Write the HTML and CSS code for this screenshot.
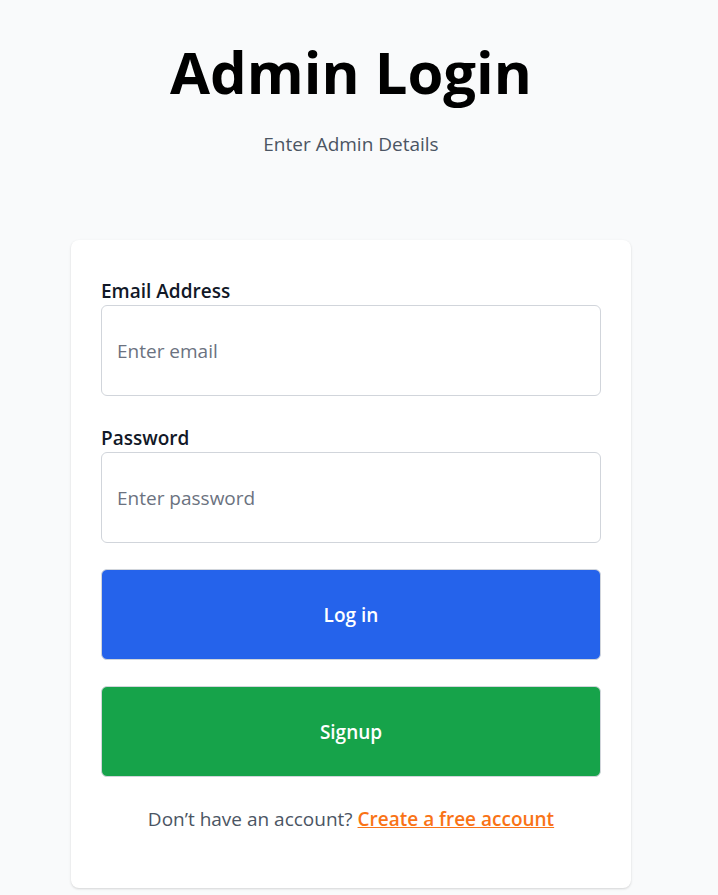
FILE: index.html
```html
<!DOCTYPE html>
<html lang="en">
<head>
<meta charset="utf-8">
<title>Admin Login</title>
<link rel="stylesheet" href="styles.css">
</head>
<body>
<main class="page">
  <header class="head">
    <h1 class="title">Admin Login</h1>
    <p class="subtitle">Enter Admin Details</p>
  </header>
  <section class="card">
    <form class="form">
      <div class="field">
        <label class="label" for="email">Email Address</label>
        <input class="input" id="email" type="email" placeholder="Enter email">
      </div>
      <div class="field">
        <label class="label" for="password">Password</label>
        <input class="input" id="password" type="password" placeholder="Enter password">
      </div>
      <button class="btn btn-blue" type="button">Log in</button>
      <button class="btn btn-green" type="button">Signup</button>
      <p class="foot">Don’t have an account? <a class="link" href="#">Create a free account</a></p>
    </form>
  </section>
</main>
</body>
</html>
```
FILE: styles.css
```css
* { box-sizing: border-box; }
html, body { margin: 0; padding: 0; }
body {
  background: #f9fafb;
  font-family: "Open Sans", "Noto Sans", sans-serif;
  color: #111827;
  height: 895px;
  overflow: hidden;
}
.page {
  width: 702px;
  display: flex;
  flex-direction: column;
  align-items: center;
}
.head {
  text-align: center;
  padding-top: 36px;
}
.title {
  margin: 0;
  font-size: 58px;
  line-height: 72px;
  font-weight: 700;
  color: #000;
}
.subtitle {
  margin: 24px 0 0;
  font-size: 19px;
  line-height: 24px;
  color: #4b5563;
}
.card {
  margin-top: 84px;
  width: 560px;
  background: #fff;
  border-radius: 8px;
  box-shadow: 0 1px 3px rgba(0,0,0,0.1), 0 1px 2px rgba(0,0,0,0.06);
  padding: 41px 30px 57px;
}
.form {
  display: flex;
  flex-direction: column;
}
.field {
  display: flex;
  flex-direction: column;
  margin-bottom: 32px;
}
.field:nth-child(2) { margin-bottom: 26px; }
.label {
  font-size: 19px;
  line-height: 20px;
  margin-bottom: 4px;
  font-weight: 600;
  color: #111827;
}
.input {
  height: 91px;
  border: 1px solid #d1d5db;
  border-radius: 6px;
  padding: 0 15px;
  font-family: inherit;
  font-size: 19px;
  color: #111827;
  background: #fff;
  outline: none;
}
.input::placeholder { color: #6b7280; }
.btn {
  height: 91px;
  border: 1px solid #d1d5db;
  border-radius: 6px;
  padding-top: 2px;
  font-family: inherit;
  font-size: 19px;
  font-weight: 600;
  color: #fff;
  cursor: pointer;
}
.btn-blue { background: #2563eb; margin-bottom: 26px; }
.btn-green { background: #16a34a; }
.foot {
  margin: 30px 0 0;
  text-align: center;
  font-size: 19px;
  line-height: 24px;
  color: #4b5563;
}
.link {
  color: #f97316;
  font-weight: 600;
  text-decoration: underline;
}
```
